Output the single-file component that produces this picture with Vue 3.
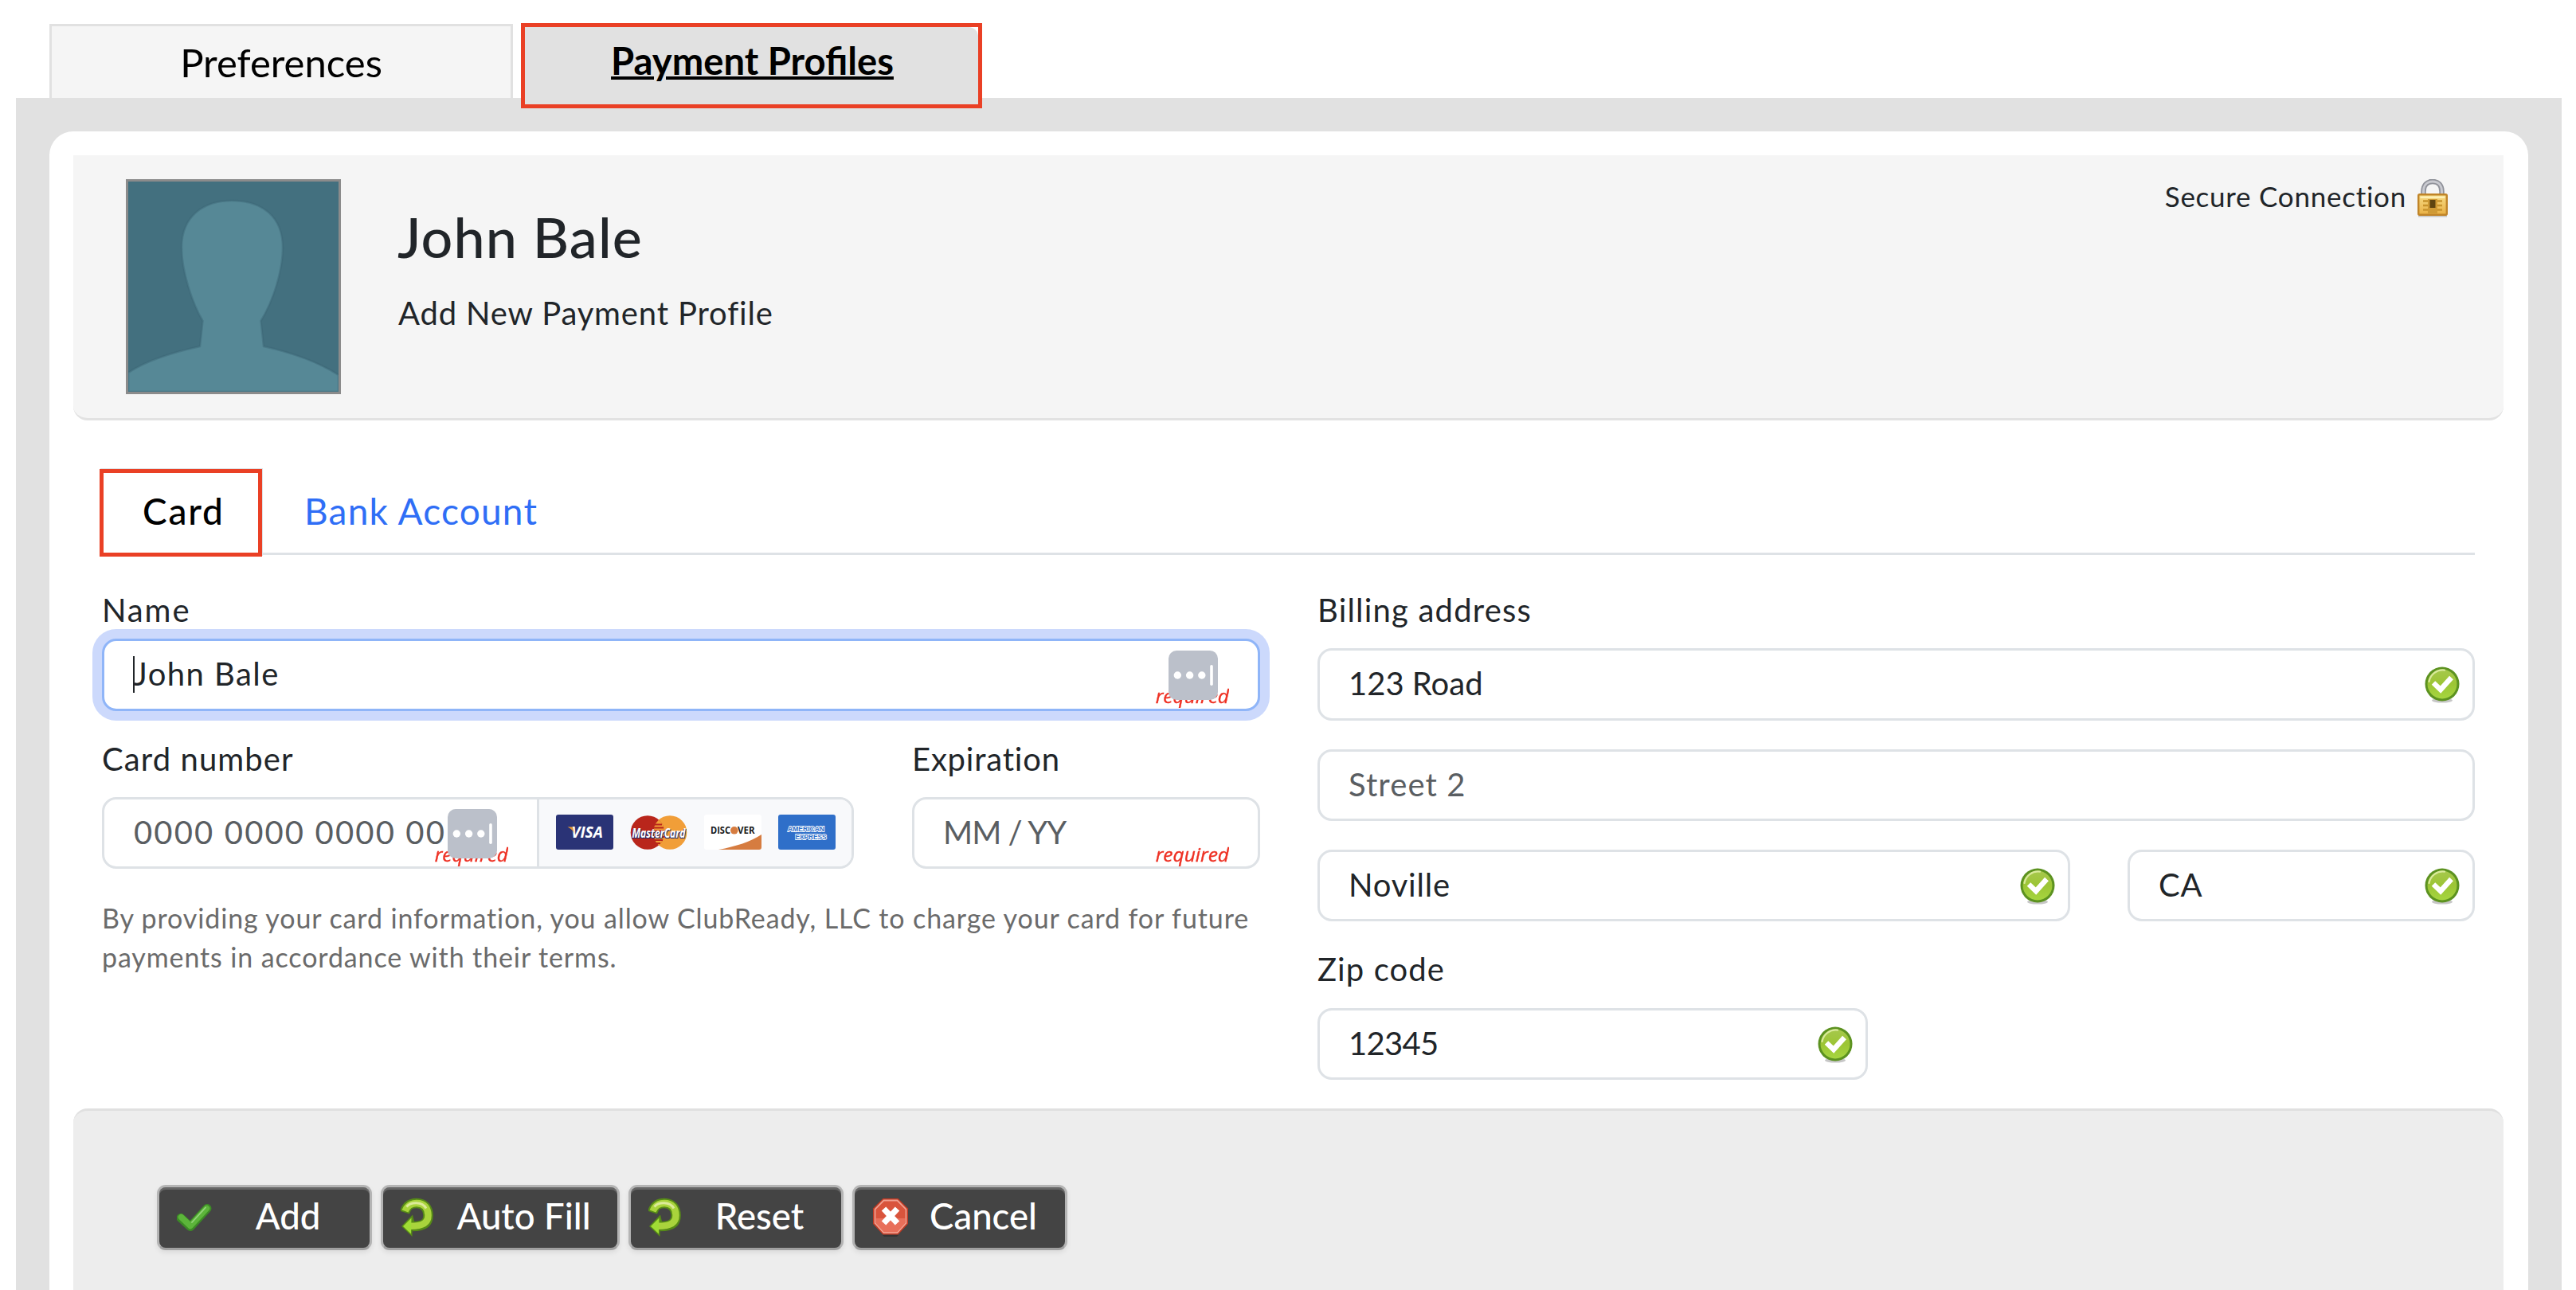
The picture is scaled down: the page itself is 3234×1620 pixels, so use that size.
<script setup>
import { h } from 'vue'

const OkIcon = () => h('svg', { class: 'ok', viewBox: '0 0 44 46', width: 44, height: 46 }, [
  h('defs', null, [
    h('linearGradient', { id: 'okFill', x1: 0, y1: 0, x2: 0, y2: 1 }, [
      h('stop', { offset: 0, 'stop-color': '#a6c84c' }),
      h('stop', { offset: 0.5, 'stop-color': '#9cc535' }),
      h('stop', { offset: 1, 'stop-color': '#a6d63f' })
    ])
  ]),
  h('ellipse', { cx: 22, cy: 42.6, rx: 13, ry: 3, fill: '#000', opacity: 0.22 }),
  h('circle', { cx: 22, cy: 22, r: 21.5, fill: '#5c9220' }),
  h('circle', { cx: 22, cy: 22, r: 18.5, fill: 'url(#okFill)' }),
  h('path', { d: 'M5.500 19A17.500 17.500 0 0 1 25 4.600', fill: 'none', stroke: '#d9ea9c', 'stroke-width': 2.2, 'stroke-linecap': 'round' }),
  h('path', { d: 'M11 20.500l9 8.500L33.500 14', fill: 'none', stroke: '#fff', 'stroke-width': 6.5 })
])

const ManagerIcon = () => h('svg', { viewBox: '0 0 62 62', width: 62, height: 62 }, [
  h('rect', { width: 62, height: 62, rx: 10, fill: '#bbc0ca' }),
  h('circle', { cx: 11.3, cy: 31, r: 4.7, fill: '#fff' }),
  h('circle', { cx: 26.6, cy: 31, r: 4.7, fill: '#fff' }),
  h('circle', { cx: 41.8, cy: 31, r: 4.7, fill: '#fff' }),
  h('rect', { x: 52.2, y: 18, width: 3.6, height: 26, rx: 1.8, fill: '#fff' })
])

const actions = [
  { label: 'Add', icon: 'check' },
  { label: 'Auto Fill', icon: 'refresh', wide: true },
  { label: 'Reset', icon: 'refresh' },
  { label: 'Cancel', icon: 'stop' }
]
</script>

<template>
  <div class="page">
    <div class="tabs">
      <div class="tab"><span>Preferences</span></div>
      <div class="tab-active"><div class="tab-fill"><span>Payment Profiles</span></div></div>
    </div>

    <div class="frame">
      <div class="panel">
        <header class="head">
          <svg class="avatar" viewBox="0 0 264 264">
            <rect width="264" height="264" fill="#43707f" />
            <path d="M0 240C24 224 58 214 90 207L93.500 175C80 152 67 112 67 83C67 44 94 24 130 24C168 24 194 44 194 83C194 112 182 150 166.500 175L170 207C202 214 238 226 264 243V264H0Z" fill="#568896" stroke="#3c6776" stroke-opacity=".45" stroke-width="2.500" />
          </svg>
          <div class="who">
            <h1>John Bale</h1>
            <p>Add New Payment Profile</p>
          </div>
          <div class="secure">
            <span>Secure Connection</span>
            <svg width="38" height="48" viewBox="0 0 38 48">
              <defs>
                <linearGradient id="gold" x1="0" y1="0" x2="0" y2="1">
                  <stop offset="0" stop-color="#f7dc86" />
                  <stop offset="1" stop-color="#e9b044" />
                </linearGradient>
              </defs>
              <path d="M7.500 22V15.500C7.500 7.500 12 3 19 3S30.500 7.500 30.500 15.500V22" fill="none" stroke="#8f9199" stroke-width="6.500" />
              <path d="M7.500 22V15.500C7.500 7.500 12 3 19 3S30.500 7.500 30.500 15.500V22" fill="none" stroke="#c9cad0" stroke-width="3" />
              <rect x="1" y="43" width="36" height="4.500" fill="#000" opacity=".2" />
              <rect x="1.200" y="19.200" width="35.600" height="25.600" rx="1.500" fill="url(#gold)" stroke="#c08428" stroke-width="2.400" />
              <rect x="3.500" y="21.500" width="31" height="2.500" fill="#fdf0b4" />
              <path d="M7 27.500H31M7 33H31M7 38.500H31" stroke="#c8932c" stroke-width="2.400" />
              <rect x="13" y="25" width="12" height="18" fill="#cf9a35" />
              <rect x="15.500" y="26" width="7" height="10" fill="#5e4410" />
            </svg>
          </div>
        </header>

        <nav class="nav">
          <div class="nav-on">Card</div>
          <div class="nav-off">Bank Account</div>
        </nav>

        <div class="form">
          <section>
            <div class="label name-label">Name</div>
            <div class="field focus">
              <span class="caret"></span>John Bale
              <em class="req">required</em>
              <ManagerIcon class="mgr" />
            </div>
            <div class="row mid">
              <div class="col-number">
                <div class="label">Card number</div>
                <div class="group">
                  <div class="number ph">
                    <span class="digits">0000 0000 0000 00</span>
                    <em class="req">required</em>
                    <ManagerIcon class="mgr" />
                  </div>
                  <div class="brands">
                    <svg width="72" height="44" viewBox="0 0 72 44">
                      <rect width="72" height="44" rx="3" fill="#2a3376" />
                      <text x="19" y="29" textLength="40" lengthAdjust="spacingAndGlyphs" class="visa">VISA</text>
                      <path d="M14.500 15.500H21L23.500 25C22 20.500 19 17.500 14.500 15.500Z" fill="#e89a3a" />
                    </svg>
                    <svg width="72" height="44" viewBox="0 0 72 44">
                      <circle cx="50" cy="22.500" r="21.300" fill="#f19e38" />
                      <circle cx="22" cy="22.500" r="21.300" fill="#b9261b" />
                      <path d="M36 6.500A21.300 21.300 0 0 1 43.300 22.500A21.300 21.300 0 0 1 36 38.500A21.300 21.300 0 0 1 30 29V16A21.300 21.300 0 0 1 36 6.500Z" fill="#f19e38" />
                      <path d="M30 12.500H40M29 16.500H42M29 20.500H43M29 28H43M29 32H41M31 36H38" stroke="#b9261b" stroke-width="1.800" />
                      <text x="2.500" y="29" textLength="67" lengthAdjust="spacingAndGlyphs" class="mc">MasterCard</text>
                    </svg>
                    <svg width="72" height="44" viewBox="0 0 72 44">
                      <rect width="72" height="44" rx="3" fill="#fff" />
                      <path d="M18 44C40 40 58 34 72 25V41A3 3 0 0 1 69 44Z" fill="#d67c40" />
                      <text x="8" y="24" textLength="25" lengthAdjust="spacingAndGlyphs" class="disc">DISC</text>
                      <circle cx="37.800" cy="19.800" r="4.800" fill="#d67c40" />
                      <text x="42" y="24" textLength="21.500" lengthAdjust="spacingAndGlyphs" class="disc">VER</text>
                    </svg>
                    <svg width="72" height="44" viewBox="0 0 72 44">
                      <rect width="72" height="44" rx="3" fill="#2f6fc9" />
                      <text x="12" y="20.500" textLength="46" lengthAdjust="spacingAndGlyphs" class="amex">AMERICAN</text>
                      <text x="21.500" y="30.500" textLength="39" lengthAdjust="spacingAndGlyphs" class="amex">EXPRESS</text>
                    </svg>
                  </div>
                </div>
              </div>
              <div class="col-exp">
                <div class="label">Expiration</div>
                <div class="field ph tight">MM / YY<em class="req">required</em></div>
              </div>
            </div>
            <p class="legal">By providing your card information, you allow ClubReady, LLC to charge your card for future<br>payments in accordance with their terms.</p>
          </section>

          <section>
            <div class="label billing">Billing address</div>
            <div class="field tall street">123 Road<OkIcon /></div>
            <div class="field ph second">Street 2</div>
            <div class="row third">
              <div class="field city">Noville<OkIcon /></div>
              <div class="field state">CA<OkIcon /></div>
            </div>
            <div class="label zip-label">Zip code</div>
            <div class="field zip">12345<OkIcon /></div>
          </section>
        </div>

        <footer class="foot">
          <div v-for="a in actions" :key="a.label" class="btn" :class="{ wide: a.wide }">
            <svg v-if="a.icon === 'check'" width="46" height="46" viewBox="0 0 46 46">
              <path d="M5 23.500L17 34.500L38 11.500" fill="none" stroke="#3c8a26" stroke-width="11" stroke-linecap="round" stroke-linejoin="round" />
              <path d="M5.500 22.500L17 33.500L37.500 11.500" fill="none" stroke="#5cb53a" stroke-width="7.500" stroke-linecap="round" stroke-linejoin="round" />
              <path d="M19 29L36 10.500" fill="none" stroke="#93d37b" stroke-width="1.800" stroke-linecap="round" />
            </svg>
            <svg v-else-if="a.icon === 'refresh'" width="46" height="50" viewBox="0 0 46 50">
              <path d="M5 18.500C8 9 13 7 20 7C30 7 34.500 13.500 34.500 22.500C34.500 32 28.500 36 15 36" fill="none" stroke="#568a17" stroke-width="12.500" />
              <path d="M15 21.500L1 36L14.500 49V41L20 37L17 30Z" fill="#568a17" />
              <path d="M5.500 17C8.500 9.500 14 7 20 7C30 7 34.500 13.500 34.500 22.500C34.500 31.500 28 35.800 12 35.800" fill="none" stroke="#a9d43c" stroke-width="8.500" />
              <path d="M13.500 25.500L3 36L13 45.500Z" fill="#a0dc35" />
              <path d="M7.500 11.500C12 5.500 27 4 32 13.500" fill="none" stroke="#dcea9a" stroke-width="3" />
            </svg>
            <svg v-else width="46" height="50" viewBox="0 0 46 50">
              <path d="M13 47H33L31 49H15Z" fill="#222" opacity=".5" />
              <path d="M13.500 1H32.500L45 13.500V33L32.500 46.500H13.500L1 33V13.500Z" fill="#c03a24" />
              <path d="M14.500 3.500H31.500L42.500 14.500V32L31.500 44H14.500L3.500 32V14.500Z" fill="#d9543c" stroke="#f0a090" stroke-width="1.800" />
              <path d="M4.500 26H41.500V32L31 43.500H15L4.500 32Z" fill="#ee7a66" opacity=".7" />
              <path d="M14.500 14L31.500 32M31.500 14L14.500 32" stroke="#fff" stroke-width="7.500" />
            </svg>
            <span>{{ a.label }}</span>
          </div>
        </footer>
      </div>
    </div>
  </div>
</template>

<style>
body { margin: 0; background: #fff; }
</style>

<style scoped>
* { box-sizing: border-box; }
.page { width: 3234px; height: 1620px; overflow: hidden; padding-top: 30px; display: flex; flex-direction: column; background: #fff; color: #212529; font-family: Lato, "Open Sans", sans-serif; }

.tabs { display: flex; height: 93px; margin-left: 62px; color: #000; line-height: 60px; text-align: center; flex: none; }
.tab { width: 582px; border: 3px solid #e1e1e1; border-bottom: 0; background: #f5f5f5; padding-top: 15px; font-size: 49px; }
.tab-active { width: 579px; height: 107px; margin: -1px 0 0 10px; border: 5px solid #ea4025; background: #fff; position: relative; z-index: 1; }
.tab-fill { height: 97px; padding: 12px 0 0 2px; background: #e1e1e1; border-top-right-radius: 12px; font-size: 47.2px; font-weight: 700; }
.tab-fill span { text-decoration: underline; text-decoration-thickness: 4px; text-underline-offset: 2px; }

.frame { flex: 1; margin: 0 18px 0 20px; padding: 42px 42px 0; background: #e1e1e1; min-height: 0; }
.panel { height: 100%; padding: 30px 31px 0 30px; background: #fff; border-radius: 30px 30px 0 0; display: flex; flex-direction: column; }

.head { height: 333px; display: flex; align-items: flex-start; padding: 30px 70px 0 66px; background: #f5f5f5; border-bottom: 3px solid #e2e2e2; border-radius: 0 0 18px 18px; flex: none; }
.avatar { width: 270px; height: 270px; border: 3px solid #8b8b8b; }
.who { margin: 32px 0 0 71px; }
h1 { margin: 0; font-size: 70px; line-height: 80px; font-weight: 500; letter-spacing: 1.1px; }
.who p { margin: 31px 0 0 1px; font-size: 40px; line-height: 50px; letter-spacing: .85px; }
.secure { display: flex; margin-left: auto; font-size: 35px; line-height: 50px; letter-spacing: .75px; gap: 14px; }
.secure span { margin-top: -4px; }

.nav { display: flex; height: 108px; margin: 61px 36px 0 33px; border-bottom: 3px solid #dee2e6; font-size: 46px; line-height: 60px; flex: none; }
.nav-on { width: 204px; height: 110px; border: 5px solid #ea4025; background: #fff; padding: 18px 0 0 49px; color: #000; font-weight: 500; letter-spacing: 1.8px; box-shadow: 1px -1px 0 #dee2e6; }
.nav-off { padding: 23px 0 0 53px; color: #2f6ef6; letter-spacing: 1.2px; }

.form { display: grid; grid-template-columns: 1454px 1453px; column-gap: 72px; height: 695px; padding: 44px 0 0 36px; flex: none; }
.label { height: 50px; line-height: 50px; font-size: 40px; letter-spacing: 1.1px; margin-bottom: 23px; }
.name-label { letter-spacing: 1.9px; margin-bottom: 11px; }
.billing { letter-spacing: 1.2px; }
.field { position: relative; display: flex; align-items: center; height: 90px; border: 3px solid #dee2e6; border-radius: 18px; padding: 0 38px 3px 36px; font-size: 40px; letter-spacing: .7px; background: #fff; }
.field.tall, .field.focus { height: 91px; }
.focus { border-color: #8fb5f8; box-shadow: 0 0 0 12px #ccd9fc; padding-left: 37px; letter-spacing: 1.45px; }
.caret { position: absolute; left: 36px; top: 19px; width: 2px; height: 46px; background: #212529; }
.ph { color: #5a5e62; }
.tight { letter-spacing: -1px; }
.street { letter-spacing: 0; }
.second { letter-spacing: 1.1px; }
.req { position: absolute; right: 36px; top: 52px; height: 32px; overflow: hidden; font: italic 500 24.5px/34px "Open Sans", sans-serif; letter-spacing: 0; color: #ee3023; filter: blur(.5px); -webkit-text-stroke: .4px #ee3023; }
.mgr { position: absolute; right: 50px; top: 12px; }
.row { display: flex; }
.mid { margin-top: 35px; justify-content: space-between; }
.col-number { width: 944px; }
.col-exp { width: 437px; }
.col-exp .label { letter-spacing: .8px; }
.group { display: flex; height: 90px; border: 3px solid #dee2e6; border-radius: 18px; overflow: hidden; }
.number { position: relative; width: 543px; display: flex; align-items: center; padding: 0 0 3px 37px; font-size: 40px; letter-spacing: 2.15px; }
.digits { white-space: nowrap; }
.number .req { right: 36px; }
.number .mgr { right: 50px; }
.brands { flex: 1; display: flex; align-items: center; gap: 21px; border-left: 3px solid #dee2e6; background: #f8f9fb; padding: 0 0 2px 21px; letter-spacing: 0; }
.brands svg { flex: none; }
.visa { font: italic 700 20px "Open Sans", sans-serif; fill: #fff; }
.mc { font: italic 700 15.5px "Open Sans", sans-serif; fill: #fff; text-shadow: 1px 1px 0 #23286a, -1px 1px 0 #23286a; }
.disc { font: 700 12px "Open Sans", sans-serif; fill: #1a1a1a; }
.amex { font: 700 9.5px "Liberation Sans", sans-serif; fill: #2f6fc9; stroke: #fff; stroke-width: 1.8px; paint-order: stroke; }
.legal { margin: 37px 0 0; font-size: 34px; line-height: 49px; letter-spacing: .88px; color: #6b6b6b; white-space: nowrap; }

.second, .third { margin-top: 36px; }
.third { justify-content: space-between; }
.city { width: 945px; letter-spacing: .8px; }
.state { width: 436px; }
.zip-label { margin: 35px 0 24px; }
.zip { width: 691px; letter-spacing: -.7px; }
.ok { position: absolute; right: 16px; top: 20px; }

.foot { flex: 1; display: flex; align-items: flex-start; gap: 11px; padding: 93px 0 0 105px; background: #ededed; border-top: 3px solid #e0e0e0; border-radius: 18px 18px 0 0; }
.btn { display: flex; align-items: center; width: 270px; height: 82px; padding: 0 9px 0 22px; border: 3px solid #b4b4b4; border-bottom-color: #a0a0a0; border-radius: 11px; background: #444; box-shadow: inset 0 3px 0 #666, 0 3px 6px rgba(0, 0, 0, .08); color: #fff; font-size: 45.5px; font-weight: 500; line-height: 60px; }
.btn svg { flex: none; }
.btn span { flex: 1; text-align: center; padding-bottom: 4px; }
.wide { width: 300px; }
</style>
